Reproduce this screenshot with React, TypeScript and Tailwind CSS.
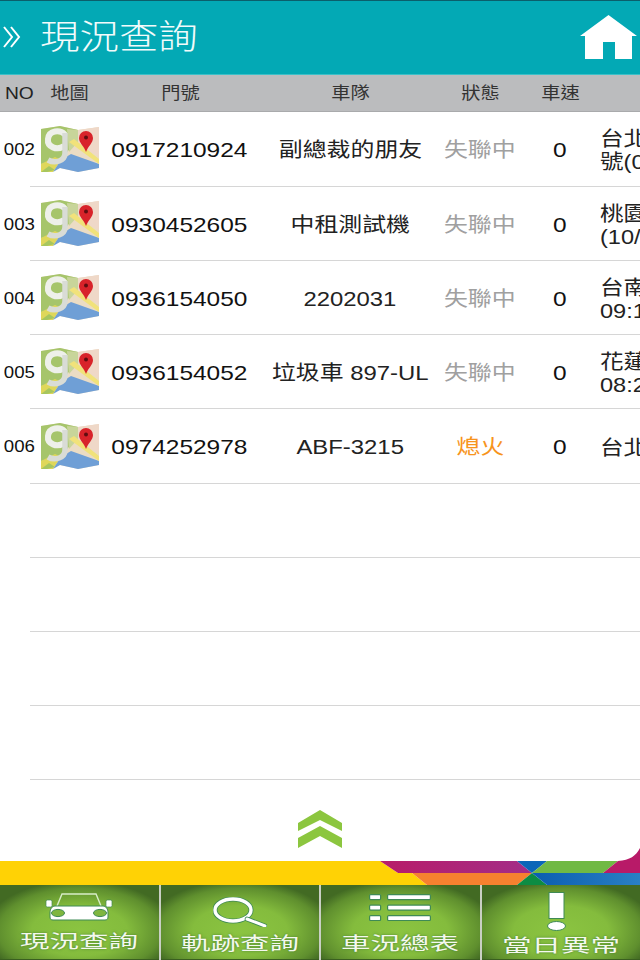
import React from "react";

const FONT = "[font-family:'Liberation_Sans','Noto_Sans_CJK_TC',sans-serif]";

type Row = { no: string; phone: string; team: string; status: string; orange?: boolean; a1: string; a2?: string };
const rows: Row[] = [
  { no: "002", phone: "0917210924", team: "副總裁的朋友", status: "失聯中", a1: "台北", a2: "號(0" },
  { no: "003", phone: "0930452605", team: "中租測試機", status: "失聯中", a1: "桃園", a2: "(10/" },
  { no: "004", phone: "0936154050", team: "2202031", status: "失聯中", a1: "台南", a2: "09:1" },
  { no: "005", phone: "0936154052", team: "垃圾車 897-UL", status: "失聯中", a1: "花蓮", a2: "08:2" },
  { no: "006", phone: "0974252978", team: "ABF-3215", status: "熄火", orange: true, a1: "台北" },
];

const cols = "grid grid-cols-[38px_62px_160px_180px_80px_80px_40px] items-center";

function Wide({ className, children }: { className?: string; children: React.ReactNode }) {
  return <span className={"inline-block whitespace-nowrap scale-x-[1.165] " + (className ?? "")}>{children}</span>;
}

function MapIcon() {
  return (
    <svg width="58" height="46" viewBox="0 0 58 46">
      <polygon points="0,3 19,0 37,4 58,1 58,42 37,46 19,42 0,46" fill="#ebdcc4" />
      <polygon points="0,3 19,0 37,4 37,12 20,34 0,38" fill="#a6c56b" />
      <polygon points="37,4 58,1 58,30 37,20" fill="#efd8c8" />
      <polygon points="26,3 37,4 37,16 28,26" fill="#c8d59a" />
      <polygon points="0,38 14,31 20,34 12,46 0,46" fill="#dfd75a" />
      <polygon points="12,46 20,34 30,28 58,38 58,42 37,46 19,42" fill="#6f9fd6" />
      <polygon points="28,16 33,13 58,33 58,38" fill="#f1e27a" />
      <polygon points="0,46 8,40 14,44 6,46" fill="#a7c65f" />
      <path d="M24 8.5C19 3.5 8 4 7 13c-1 8 9 12 16 7" fill="none" stroke="#eef0ea" strokeWidth="6" />
      <path d="M24 7V27c0 8-10 11-17 7" fill="none" stroke="#d9dcd6" strokeWidth="5.5" />
      <path d="M45 26c-2-6-7-9-7-14a7 7 0 0 1 14 0c0 5-5 8-7 14z" fill="#d8232a" />
      <circle cx="45" cy="11.5" r="2" fill="#5e0d10" />
    </svg>
  );
}

function Car() {
  return (
    <svg width="68" height="28" viewBox="0 0 68 28">
      <path d="M12 13 17 1h34l5 12" fill="none" stroke="#d8edc8" strokeWidth="1.4" />
      <path d="M10 13h48c3 0 5 3 5 7v4c0 2-1 3-3 3H8c-2 0-3-1-3-3v-4c0-4 2-7 5-7z" fill="#fff" stroke="#3f8a55" strokeWidth="1" />
      <ellipse cx="13" cy="20" rx="6.5" ry="3.6" fill="#7fb63f" stroke="#3f8a55" />
      <ellipse cx="55" cy="20" rx="6.5" ry="3.6" fill="#7fb63f" stroke="#3f8a55" />
      <rect x="1" y="7" width="6" height="7" rx="1.5" fill="#fff" stroke="#3f8a55" strokeWidth="0.7" />
      <rect x="61" y="7" width="6" height="7" rx="1.5" fill="#fff" stroke="#3f8a55" strokeWidth="0.7" />
    </svg>
  );
}

function Search() {
  return (
    <svg width="54" height="30" viewBox="0 0 54 30">
      <ellipse cx="20" cy="13" rx="18" ry="11" fill="none" stroke="#3f8a55" strokeWidth="5" />
      <ellipse cx="20" cy="13" rx="18" ry="11" fill="none" stroke="#fff" strokeWidth="3.4" />
      <path d="M34 22 52 29" stroke="#3f8a55" strokeWidth="4.6" strokeLinecap="round" />
      <path d="M34 22 52 29" stroke="#fff" strokeWidth="3" strokeLinecap="round" />
    </svg>
  );
}

function List() {
  const ys = [0, 10.5, 21];
  return (
    <svg width="62" height="27" viewBox="0 0 62 27" className="-ml-[1px]">
      {ys.map((y) => (
        <g key={y} fill="#fff" stroke="#3f8a55" strokeWidth="1.2">
          <rect x="0.6" y={y + 0.6} width="11" height="5" rx="1" />
          <rect x="18.6" y={y + 0.6} width="42.8" height="5" rx="1" />
        </g>
      ))}
    </svg>
  );
}

function Exclaim() {
  return (
    <svg width="20" height="39" viewBox="0 0 20 39" className="-ml-[7px]">
      <rect x="2" y="0.5" width="15" height="26" fill="#fff" stroke="#3f8a55" />
      <ellipse cx="9.5" cy="34" rx="9" ry="4.5" fill="#fff" stroke="#3f8a55" />
    </svg>
  );
}

function Tab({ label, icon, top, gap }: { label: string; icon: React.ReactNode; top: string; gap: string }) {
  return (
    <div className={"flex-1 h-full flex flex-col items-center border-b border-b-[#3a5f20] bg-[radial-gradient(ellipse_60%_68%_at_50%_62%,#8bc441_0%,#84bc3d_50%,#5f8f2e_85%,#426a23_100%)] " + top}>
      <div className="h-fit leading-[0] flex">{icon}</div>
      <div className={"text-[18px] leading-[18px] text-[#f4f8ee] whitespace-nowrap scale-x-[1.64] [text-shadow:0_0_2px_#3f7a30] " + gap}>{label}</div>
    </div>
  );
}

function Ribbon() {
  return (
    <svg width="640" height="37" viewBox="0 848 640 37" className="block -mt-[13px] relative">
      <defs>
        <linearGradient id="mag" x1="0" x2="1" y1="0" y2="0">
          <stop offset="0" stopColor="#b81c68" />
          <stop offset="1" stopColor="#a32d88" />
        </linearGradient>
        <linearGradient id="blu" x1="0" x2="1" y1="0" y2="0">
          <stop offset="0" stopColor="#0a5db0" />
          <stop offset="1" stopColor="#2a80c4" />
        </linearGradient>
      </defs>
      <polygon points="0,861 380,861 398,873 412,873 427,885 0,885" fill="#ffd205" />
      <polygon points="380,861 517,861 532,873 398,873" fill="url(#mag)" />
      <polygon points="412,873 532,873 517,885 427,885" fill="#f6812f" />
      <polygon points="517,861 547,861 532,873" fill="#0b66b8" />
      <polygon points="517,885 547,885 532,873" fill="#0d8c43" />
      <polygon points="547,861 618,861 603,873 532,873" fill="#70b944" />
      <path d="M603 873 618 861C630 860 636 856 640 848V873Z" fill="#b81a68" />
      <polygon points="532,873 640,873 640,885 547,885" fill="url(#blu)" />
    </svg>
  );
}

export default function App() {
  return (
    <div className={"w-[640px] h-[960px] overflow-hidden bg-white flex flex-col " + FONT}>
      <header className="h-[75px] shrink-0 bg-[#03a9b5] border-t border-t-[#0b5f6b] border-b border-b-[#3cc0c8] flex items-center">
        <svg className="ml-[3px] w-[37px] shrink-0 -mt-[1px]" width="37" height="22" viewBox="0 0 37 22" fill="none" stroke="#fff" strokeWidth="2">
          <path d="M1 1 9 11 1 21" />
          <path d="M8 1 16 11 8 21" />
        </svg>
        <span className="text-[34px] leading-none font-light text-[#f2fbfb] scale-x-[1.16] origin-left whitespace-nowrap -mt-[2px]">現況查詢</span>
        <svg className="ml-auto mr-[3px] -mt-[2px]" width="57" height="44" viewBox="0 0 57 44" fill="#fff">
          <path d="M28.5 0 57 21H52V44H35V27H23V44H5V21H0Z" />
        </svg>
      </header>

      <div className={cols + " h-[37px] shrink-0 bg-[#bbbcbe] border-b border-b-[#a9aaac] text-[#333] text-[16.5px]"}>
        <span className="text-center text-[#222]"><Wide>NO</Wide></span>
        <span className="text-center"><Wide>地圖</Wide></span>
        <span className="text-center"><Wide>門號</Wide></span>
        <span className="text-center"><Wide>車隊</Wide></span>
        <span className="text-center"><Wide>狀態</Wide></span>
        <span className="text-center"><Wide>車速</Wide></span>
        <span />
      </div>

      <div className="flex flex-col shrink-0">
        {rows.map((r, i) => (
          <div key={r.no} className={"relative shrink-0 " + (i === 0 || i === 4 ? "h-[75px]" : "h-[74px]")}>
            <div className={cols + " h-full overflow-hidden pt-[1px]"}>
              <span className="text-center text-[16px] text-[#111]"><Wide>{r.no}</Wide></span>
              <span className="pl-[3px] flex -mt-[3px]"><MapIcon /></span>
              <span className="text-center text-[21px] text-[#111] -ml-[1px]"><Wide>{r.phone}</Wide></span>
              <span className="text-center text-[20.5px] text-[#222] mt-[1px]"><Wide>{r.team}</Wide></span>
              <span className={"text-center text-[20.5px] mt-[1px] " + (r.orange ? "text-[#f7941d]" : "text-[#a0a0a0]")}><Wide>{r.status}</Wide></span>
              <span className="text-center text-[21px] text-[#111]"><Wide>0</Wide></span>
              <div className="text-[20.5px] leading-[23px] text-[#222] whitespace-nowrap">
                <div><span className="inline-block scale-x-[1.15] origin-left">{r.a1}</span></div>
                {r.a2 && <div><span className="inline-block scale-x-[1.15] origin-left">{r.a2}</span></div>}
              </div>
            </div>
            <div className="absolute left-[30px] right-0 bottom-0 h-px bg-[#d6d6d6]" />
          </div>
        ))}
        {[0, 1, 2, 3].map((i) => (
          <div key={i} className="h-[74px] shrink-0 border-b border-b-[#d6d6d6] ml-[30px]" />
        ))}
      </div>

      <div className="flex-1 flex justify-center pt-[30px]">
        <svg width="44" height="38" viewBox="0 0 44 38" className="block">
          <path d="M22 0 44 13V21L22 10 0 21V13Z" fill="#8cc63f" />
          <path d="M22 16 44 28V38L22 26 0 38V28Z" fill="#8cc63f" />
        </svg>
      </div>

      <Ribbon />

      <nav className="h-[75px] shrink-0 flex bg-[#c9cfc4] gap-[2px]">
        <Tab label="現況查詢" icon={<Car />} top="pt-[8px]" gap="mt-[12px]" />
        <Tab label="軌跡查詢" icon={<Search />} top="pt-[12px]" gap="mt-[8px]" />
        <Tab label="車況總表" icon={<List />} top="pt-[9px]" gap="mt-[14px]" />
        <Tab label="當日異常" icon={<Exclaim />} top="pt-[7px]" gap="mt-[6px]" />
      </nav>
    </div>
  );
}
